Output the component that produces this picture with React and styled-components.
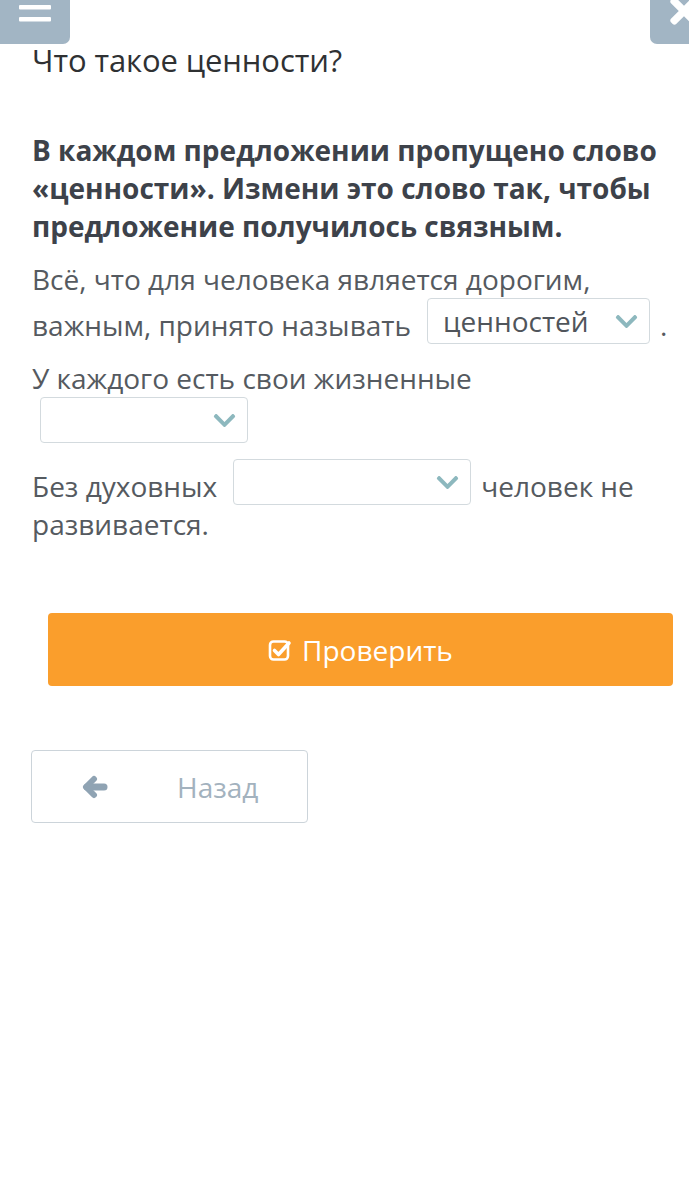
import styled, { createGlobalStyle } from 'styled-components';
import { FaTimes, FaChevronDown } from 'react-icons/fa';

const GlobalStyle = createGlobalStyle`
  html, body {
    margin: 0;
    padding: 0;
    background: #ffffff;
    overflow-x: hidden;
  }
  body {
    font-family: "Open Sans", "Noto Sans", sans-serif;
    color: #555a60;
  }
`;

// галочка в квадрате для кнопки "Проверить"
const CheckIcon = () => (
  <svg width="24" height="24" viewBox="0 0 24 24" fill="none">
    <rect x="2" y="3.5" width="18" height="18" rx="3.5" stroke="#fff" strokeWidth="2.6" />
    <path d="M6.5 12.5 L10.5 16.5 L21 5" stroke="#fff" strokeWidth="3.6" strokeLinecap="round" strokeLinejoin="round" />
  </svg>
);

const ArrowIcon = () => (
  <svg width="26" height="24" viewBox="0 0 26 24" fill="none">
    <path d="M12 4 L4 12 L12 20" stroke="#8fa3b3" strokeWidth="6" strokeLinecap="round" strokeLinejoin="round" />
    <path d="M5 12 H22" stroke="#8fa3b3" strokeWidth="7" strokeLinecap="round" />
  </svg>
);

const BarsIcon = () => (
  <svg width="32" height="30" viewBox="0 0 32 30">
    <rect x="0" y="0" width="32" height="4.5" rx="1" fill="#fff" />
    <rect x="0" y="12" width="32" height="4.5" rx="1" fill="#fff" />
    <rect x="0" y="24" width="32" height="4.5" rx="1" fill="#fff" />
  </svg>
);

export default function App() {
  return (
    <Page>
      <GlobalStyle />
      <TopBar>
        <MenuButton>
          <BarsIcon />
        </MenuButton>
        <CloseButton>
          <FaTimes />
        </CloseButton>
      </TopBar>

      <Content>
        <Title>Что такое ценности?</Title>

        <Task>
          В каждом предложении пропущено слово «ценности». Измени это слово так, чтобы
          предложение получилось связным.
        </Task>

        <Sentence>
          Всё, что для человека является дорогим, важным, принято называть
          <Select width={223} left={16} right={10}>
            <span>ценностей</span>
            <Chevron />
          </Select>
          .
        </Sentence>

        <Sentence>
          У каждого есть свои жизненные{' '}
          <Select width={208} left={8} right={0}>
            <span />
            <Chevron />
          </Select>
        </Sentence>

        <Sentence gap={16}>
          Без духовных
          <Select width={238} left={16} right={10}>
            <span />
            <Chevron />
          </Select>
          человек не развивается.
        </Sentence>

        <CheckButton>
          <CheckIcon />
          Проверить
        </CheckButton>

        <BackButton>
          <BackIcon>
            <ArrowIcon />
          </BackIcon>
          <span>Назад</span>
        </BackButton>
      </Content>
    </Page>
  );
}

const Page = styled.div`
  width: 689px;
  min-height: 1185px;
  background: #ffffff;
  overflow: hidden;
`;

const TopBar = styled.div`
  display: flex;
  justify-content: space-between;
  height: 44px;
`;

const ToolButton = styled.div`
  width: 70px;
  height: 44px;
  background: #a2b5c4;
  color: #ffffff;
  display: flex;
  align-items: flex-start;
`;

const MenuButton = styled(ToolButton)`
  border-radius: 0 0 7px 0;
  justify-content: center;
  svg {
    margin-top: -7px;
  }
`;

const CloseButton = styled(ToolButton)`
  border-radius: 0 0 0 7px;
  margin-right: -31px;
  font-size: 40px;
  svg {
    margin-top: -9px;
    margin-left: 14px;
  }
`;

const Content = styled.div`
  padding: 0 16px 0 32px;
`;

const Title = styled.h1`
  margin: -4px 0 0;
  font-size: 31px;
  font-weight: 400;
  line-height: 40px;
  color: #2f3133;
  letter-spacing: -0.1px;
`;

const Task = styled.p`
  margin: 51px 0 0;
  font-size: 28px;
  font-weight: 700;
  line-height: 38px;
  color: #3d424a;
`;

const Sentence = styled.p`
  margin: ${(p) => p.gap || 15}px 0 0;
  font-size: 28px;
  line-height: 38px;
  color: #555a60;
`;

const Select = styled.span`
  display: inline-flex;
  align-items: center;
  justify-content: space-between;
  box-sizing: border-box;
  width: ${(p) => p.width}px;
  height: 46px;
  margin: 0 ${(p) => p.right}px 0 ${(p) => p.left}px;
  padding: 0 10px 0 15px;
  vertical-align: text-bottom;
  border: 1px solid #d3dade;
  border-radius: 4px;
  background: #ffffff;
  color: #50555b;
  line-height: 1;
`;

const Chevron = styled(FaChevronDown)`
  color: #8db8be;
  font-size: 25px;
`;

const CheckButton = styled.button`
  display: flex;
  align-items: center;
  justify-content: center;
  gap: 10px;
  width: calc(100% - 16px);
  height: 73px;
  margin: 70px 0 0 16px;
  border: none;
  border-radius: 4px;
  background: #fa9e2c;
  color: #ffffff;
  font-family: "Open Sans", sans-serif;
  font-size: 28px;
`;

const BackButton = styled.button`
  display: flex;
  align-items: center;
  width: 277px;
  height: 73px;
  margin: 64px 0 0 -1px;
  padding: 0 0 0 50px;
  box-sizing: border-box;
  border: 1px solid #ccd4da;
  border-radius: 4px;
  background: #ffffff;
  color: #a3b2be;
  font-family: "Open Sans", sans-serif;
  font-size: 28px;
`;

const BackIcon = styled.span`
  display: flex;
  width: 95px;
`;
